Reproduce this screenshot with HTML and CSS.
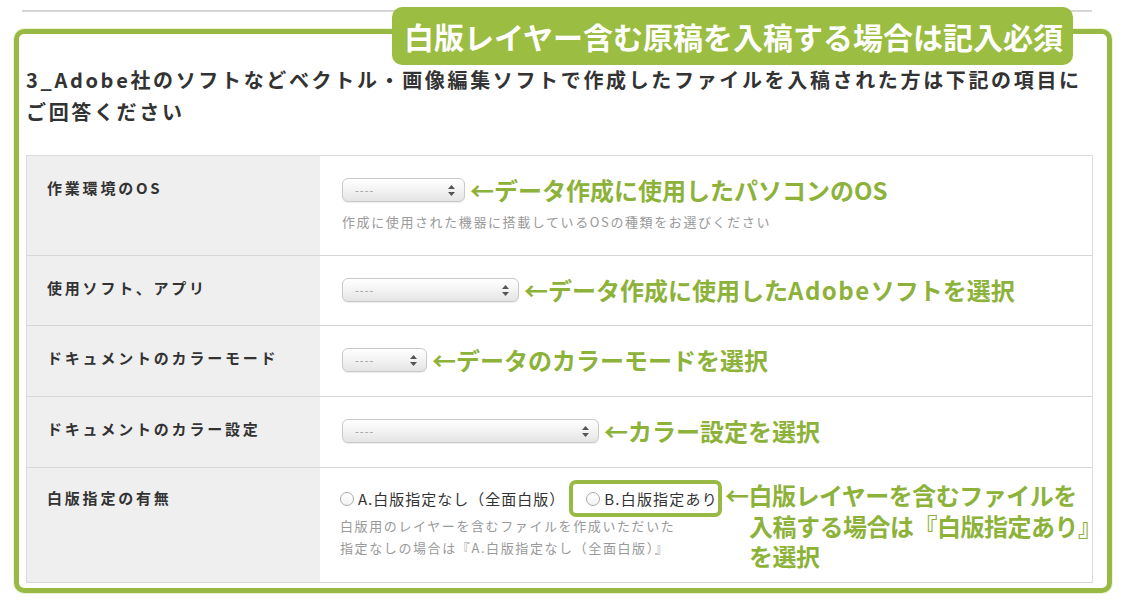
FILE: index.html
```html
<!DOCTYPE html>
<html lang="ja">
<head>
<meta charset="utf-8">
<title>白版レイヤー</title>
<link rel="stylesheet" href="styles.css">
</head>
<body>
<div class="sheet">
  <div class="topline"></div>
  <div class="badge">白版レイヤー含む原稿を入稿する場合は記入必須</div>
  <section class="frame">
    <h2 class="heading">3_Adobe社のソフトなどベクトル・画像編集ソフトで作成したファイルを入稿された方は下記の項目に<br>ご回答ください</h2>
    <div class="form">
      <div class="row r1">
        <div class="label">作業環境のOS</div>
        <div class="value">
          <div class="line">
            <div class="select w1"><span>----</span><svg width="7" height="11" viewBox="0 0 7 11"><path d="M3.5 0L7 4H0Z M0 7H7L3.5 11Z" fill="#555"/></svg></div>
            <span class="note">←データ作成に使用したパソコンのOS</span>
          </div>
          <p class="desc">作成に使用された機器に搭載しているOSの種類をお選びください</p>
        </div>
      </div>
      <div class="row r2">
        <div class="label">使用ソフト、アプリ</div>
        <div class="value">
          <div class="line">
            <div class="select w2"><span>----</span><svg width="7" height="11" viewBox="0 0 7 11"><path d="M3.5 0L7 4H0Z M0 7H7L3.5 11Z" fill="#555"/></svg></div>
            <span class="note">←データ作成に使用した<span class="latin">Adobe</span>ソフトを選択</span>
          </div>
        </div>
      </div>
      <div class="row r3">
        <div class="label">ドキュメントのカラーモード</div>
        <div class="value">
          <div class="line">
            <div class="select w3"><span>----</span><svg width="7" height="11" viewBox="0 0 7 11"><path d="M3.5 0L7 4H0Z M0 7H7L3.5 11Z" fill="#555"/></svg></div>
            <span class="note">←データのカラーモードを選択</span>
          </div>
        </div>
      </div>
      <div class="row r4">
        <div class="label">ドキュメントのカラー設定</div>
        <div class="value">
          <div class="line">
            <div class="select w4"><span>----</span><svg width="7" height="11" viewBox="0 0 7 11"><path d="M3.5 0L7 4H0Z M0 7H7L3.5 11Z" fill="#555"/></svg></div>
            <span class="note">←カラー設定を選択</span>
          </div>
        </div>
      </div>
      <div class="row r5">
        <div class="label">白版指定の有無</div>
        <div class="value v5">
          <div class="left">
            <div class="radios">
              <label class="radio"><span class="dot"></span>A.白版指定なし（全面白版）</label>
              <label class="radio boxed"><span class="dot"></span>B.白版指定あり</label>
            </div>
            <p class="desc d5">白版用のレイヤーを含むファイルを作成いただいた<br>指定なしの場合は『A.白版指定なし（全面白版）』</p>
          </div>
          <p class="note multi">←白版レイヤーを含むファイルを<br>入稿する場合は『白版指定あり』<br>を選択</p>
        </div>
      </div>
    </div>
  </section>
</div>
</body>
</html>
```
FILE: styles.css
```css
* { box-sizing: border-box; }
html, body { margin: 0; padding: 0; background: #fff; }
body {
  font-family: "Noto Sans CJK JP", "Noto Sans", sans-serif;
  color: #333;
}
.sheet {
  position: relative;
  width: 1134px;
  height: 604px;
  padding-top: 10px;
}
.topline {
  margin: 0 42px 0 22px;
  height: 2px;
  background: #d6d6d6;
}
.badge {
  position: absolute;
  left: 392px;
  top: 7px;
  width: 681px;
  height: 58px;
  border-radius: 10px;
  background: #9bbd41;
  color: #fff;
  font-weight: 700;
  font-size: 30px;
  line-height: 58px;
  padding-left: 12px;
  white-space: nowrap;
  z-index: 2;
}
.frame {
  margin: 17px 22px 0 14px;
  border: 5px solid #98ba45;
  border-radius: 10px;
  padding: 30px 14px 5px 7px;
  box-shadow: 0 0 0 1px #eef3da;
}
.heading {
  margin: 0 0 27px 0;
  font-size: 20px;
  line-height: 32px;
  font-weight: 700;
  letter-spacing: 2.65px;
  white-space: nowrap;
  color: #333;
}
.form {
  border: 1px solid #dcdcdc;
  border-bottom: 0;
}
.row {
  display: grid;
  grid-template-columns: 293px minmax(0, 1fr);
  border-bottom: 1px solid #d6d6d6;
}
.label {
  background: #efefef;
  padding: 22px 0 0 20px;
  font-size: 15px;
  line-height: 20px;
  font-weight: 700;
  letter-spacing: 2.8px;
  color: #333;
}
.value {
  padding: 17px 0 0 22px;
  background: #fff;
  min-width: 0;
}
.r1 { height: 100px; }
.r2 { height: 70px; }
.r3 { height: 71px; }
.r4 { height: 71px; }
.r5 { height: 115px; }
.r5 .label { padding-top: 20px; }
.line {
  display: flex;
  align-items: center;
  height: 34px;
  gap: 5px;
}
.select {
  display: flex;
  align-items: center;
  justify-content: space-between;
  height: 24px;
  padding: 0 9px 0 12px;
  border: 1px solid #c9c9c9;
  border-radius: 6px;
  background: linear-gradient(#ffffff, #f3f3f3 50%, #e4e4e4);
  box-shadow: 0 1px 1px rgba(0,0,0,0.08);
  font-size: 11px;
  color: #999;
  letter-spacing: 1px;
}
.w1 { width: 123px; }
.w2 { width: 177px; }
.w3 { width: 85px; }
.w4 { width: 257px; }
.note {
  font-size: 24px;
  font-weight: 700;
  color: #8db23a;
  white-space: nowrap;
  line-height: 34px;
}
.latin { letter-spacing: 1.5px; }
.desc {
  margin: 6px 0 0 0;
  font-size: 13px;
  line-height: 18px;
  color: #999;
  letter-spacing: 1.6px;
  white-space: nowrap;
}
.v5 {
  display: flex;
  align-items: flex-start;
  padding-top: 12px;
  padding-left: 20px;
}
.left { flex: none; }
.radios {
  display: flex;
  align-items: center;
  height: 37px;
}
.radio {
  display: inline-flex;
  align-items: center;
  font-size: 15px;
  letter-spacing: 1px;
  color: #333;
  white-space: nowrap;
}
.dot {
  width: 14px;
  height: 14px;
  border: 1px solid #aaa;
  border-radius: 50%;
  background: linear-gradient(#fff, #f2f2f2);
  margin-right: 4px;
}
.boxed {
  margin-left: 4px;
  height: 37px;
  padding: 0 0 0 13px;
  border: 4px solid #98ba45;
  border-radius: 7px;
  letter-spacing: 1.2px;
}
.d5 {
  margin-top: -2px;
  line-height: 22px;
  font-size: 13px;
  letter-spacing: 1.6px;
}
.note.multi {
  margin: 0 0 0 3px;
  line-height: 30.5px;
  letter-spacing: -0.5px;
  padding-left: 24px;
  text-indent: -24px;
}
```
